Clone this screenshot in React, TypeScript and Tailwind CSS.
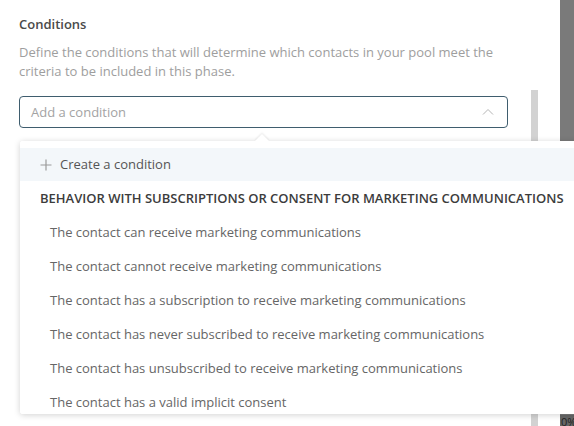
import React from "react";

const items = [
  "The contact can receive marketing communications",
  "The contact cannot receive marketing communications",
  "The contact has a subscription to receive marketing communications",
  "The contact has never subscribed to receive marketing communications",
  "The contact has unsubscribed to receive marketing communications",
  "The contact has a valid implicit consent",
];

export default function App() {
  return (
    <div className="relative w-[574px] h-[426px] overflow-hidden bg-white font-['Open_Sans',sans-serif]">
      <div className="flex h-full">
        <div className="relative w-[560px] h-full">
          <div className="pl-[19px] pr-[52px] pt-[14px]">
            <h2 className="text-[13px] leading-[20px] font-semibold text-[#4a4a4a]">Conditions</h2>
            <p className="mt-[9px] text-[13px] leading-[19px] text-[#9e9e9e]">
              Define the conditions that will determine which contacts in your pool meet the criteria to be included in this phase.
            </p>
            <div className="relative mt-[15px]">
              <div className="flex h-[32px] items-center justify-between rounded-[4px] border border-[#3f5d6e] pl-[11px] pr-[13px]">
                <span className="text-[13px] text-[#a3a3a3] translate-y-[1px]">Add a condition</span>
                <svg width="12" height="8" viewBox="0 0 12 8" fill="none">
                  <path d="M1 6.5 L6 1.5 L11 6.5" stroke="#b5b5b5" strokeWidth="1" />
                </svg>
              </div>
            </div>
          </div>
          <div className="absolute left-[531px] top-[90px] bottom-0 w-[7px] bg-[#d2d2d2]" />
        </div>
        <div className="relative flex-1 bg-[#7a7a7a]">
          <span className="absolute left-0 bottom-[-3px] bg-[#666] px-[1px] text-[11px] leading-[14px] text-[#222]">0%</span>
        </div>
      </div>

      <div className="absolute left-[20px] top-[141px] w-[570px] h-[273px] bg-white rounded-[3px] shadow-[0_1px_6px_rgba(0,0,0,0.18)]">
        <div className="absolute left-[237px] top-[-5px] h-[10px] w-[10px] rotate-45 bg-white shadow-[-1px_-1px_2px_rgba(0,0,0,0.08)]" />
        <div className="relative flex h-full flex-col overflow-hidden rounded-[3px] bg-white pt-[7px]">
          <div className="flex h-[33px] shrink-0 items-center bg-[#f3f7fa] pl-[20px]">
            <svg width="12" height="12" viewBox="0 0 12 12" fill="none">
              <path d="M6 0.5 V11.5 M0.5 6 H11.5" stroke="#9a9a9a" strokeWidth="1.2" />
            </svg>
            <span className="ml-[8px] text-[13px] text-[#555]">Create a condition</span>
          </div>
          <div className="flex h-[35px] shrink-0 items-center pl-[20px] text-[13px] font-semibold text-[#3c3c3c] whitespace-nowrap">
            BEHAVIOR WITH SUBSCRIPTIONS OR CONSENT FOR MARKETING COMMUNICATIONS
          </div>
          {items.map((t) => (
            <div key={t} className="flex h-[34px] shrink-0 items-center pl-[30px] text-[13px] text-[#666] whitespace-nowrap">
              {t}
            </div>
          ))}
        </div>
      </div>
    </div>
  );
}
